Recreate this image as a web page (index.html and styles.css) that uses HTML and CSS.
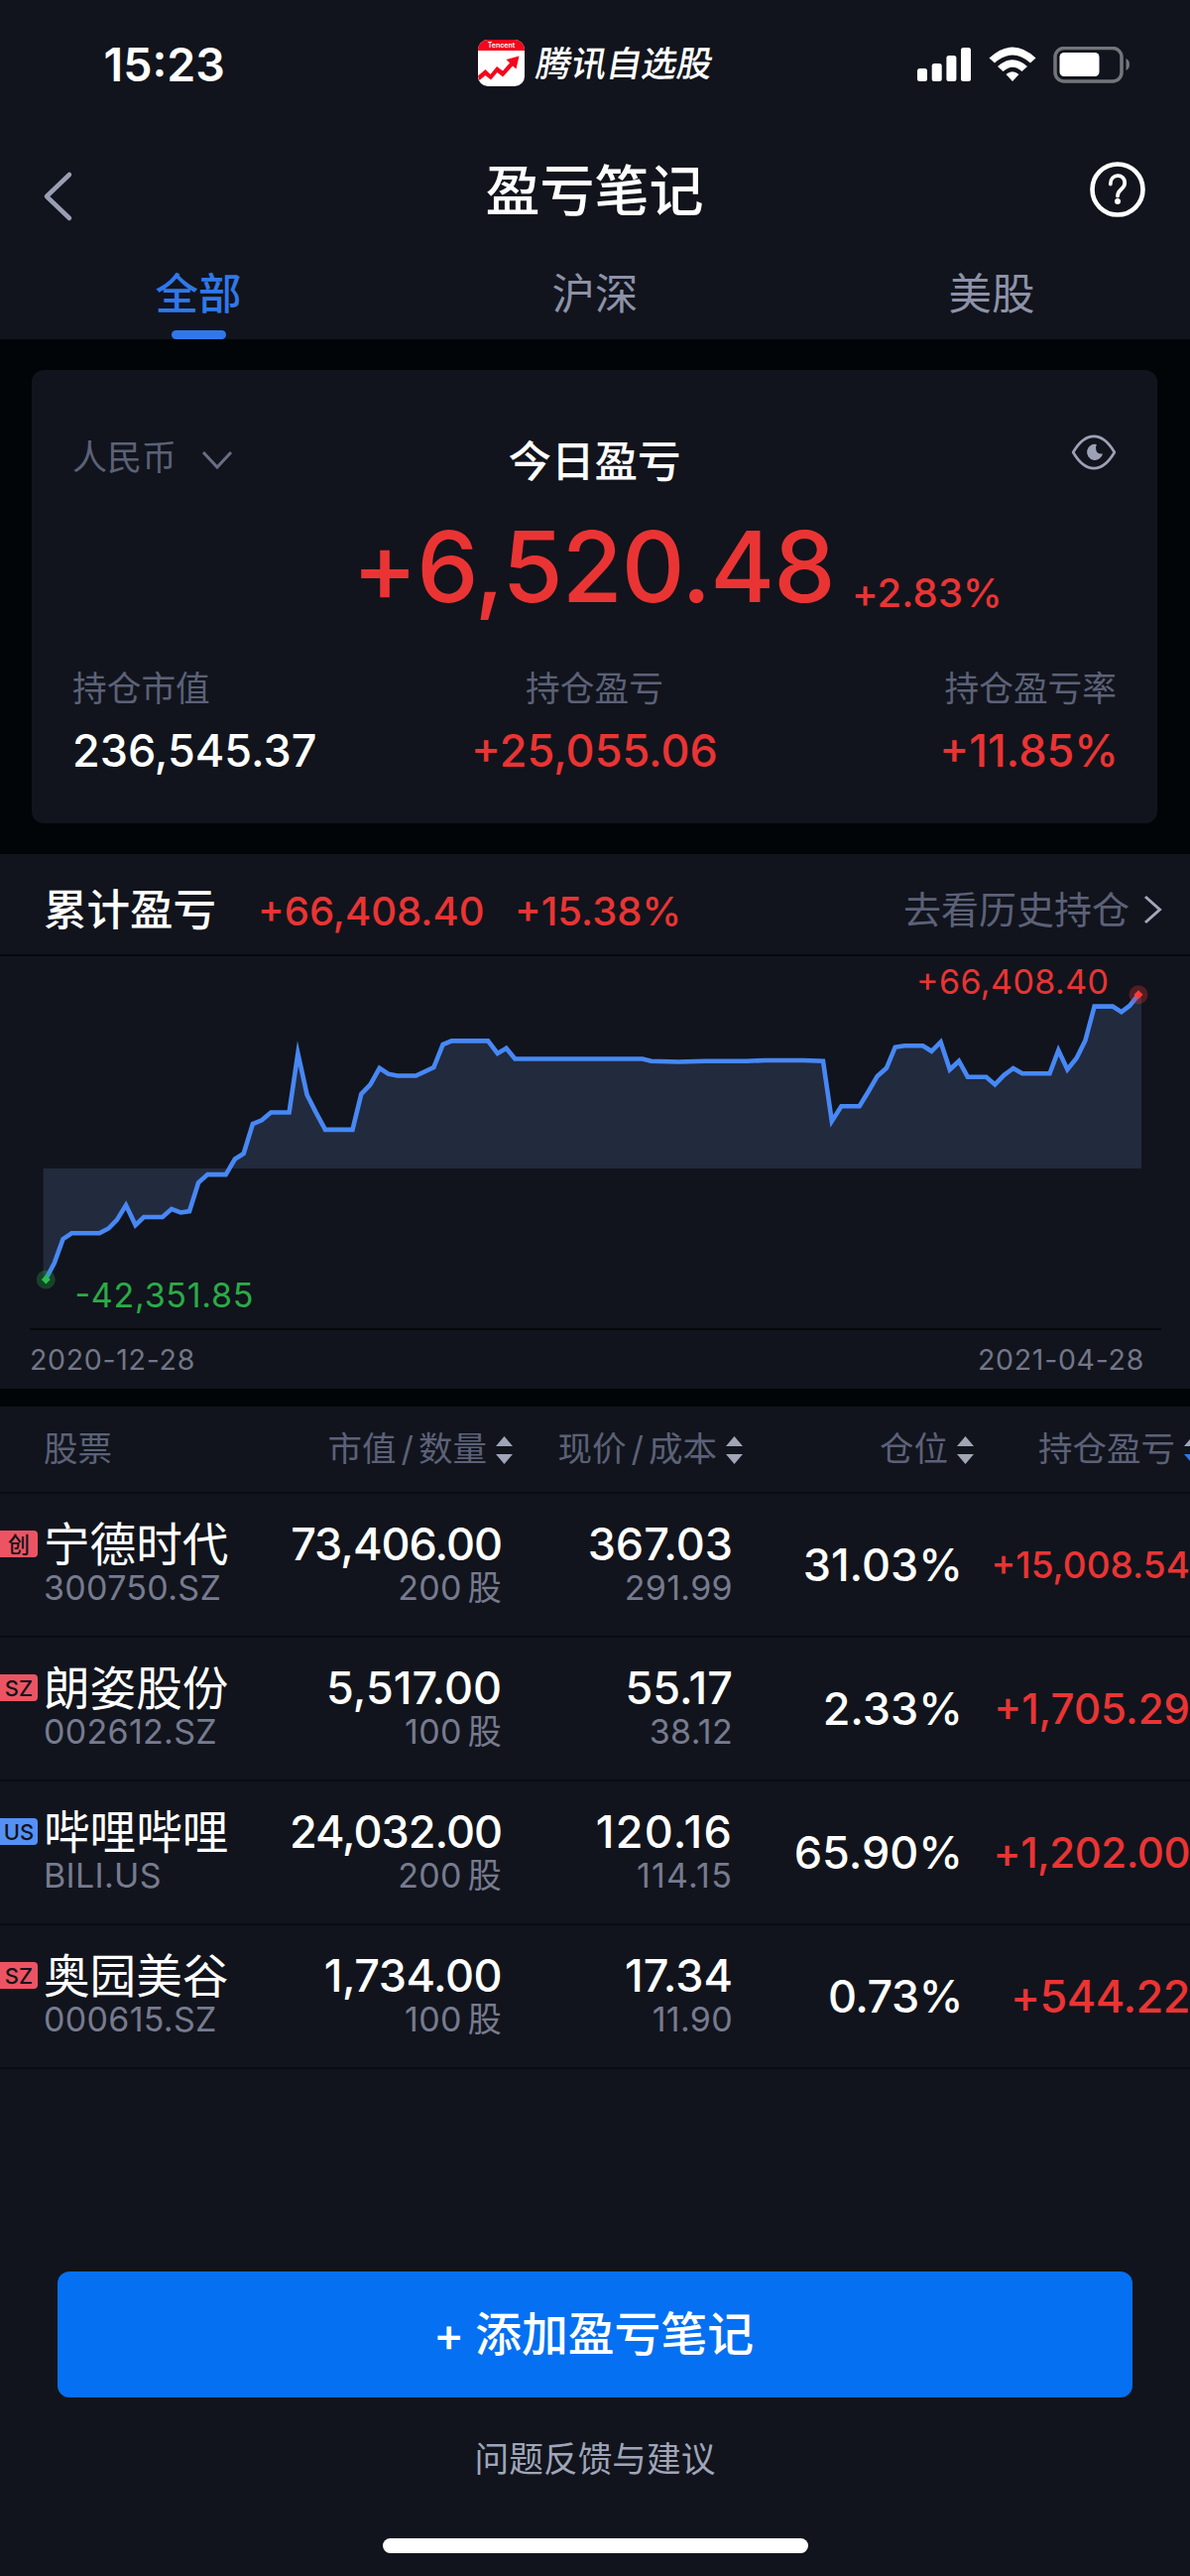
FILE: index.html
```html
<!DOCTYPE html>
<html lang="zh-CN">
<head>
<meta charset="utf-8">
<title>盈亏笔记</title>
<link rel="stylesheet" href="styles.css">
</head>
<body>
<div class="screen">
  <header class="top">
    <div class="status">
      <span class="clock">15:23</span>
      <div class="brand">
        <svg class="logo" viewBox="0 0 47 47"><rect width="47" height="47" rx="10" fill="#fff"/><path d="M0 11V10A10 10 0 0 1 10 0H37A10 10 0 0 1 47 10V11Z" fill="#f5061c"/><text x="23.5" y="8" text-anchor="middle" class="logo-text">Tencent</text><path d="M0 36.5 L7.500 30 L12.500 35 L19 27 L25 31.500 L32 23.500 L28.500 20 L41.500 16.500 L38.500 29.500 L35 26.500 L25 37.500 L19.500 33 L13 40.500 L7.500 36 L1.500 41 Z" fill="#f5061c"/></svg>
        <span class="brand-name">腾讯自选股</span>
      </div>
      <svg class="indicators" viewBox="0 0 216 42"><g fill="#fff"><rect x="0" y="22" width="10" height="13" rx="2.500"/><rect x="14.700" y="17" width="10" height="18" rx="2.500"/><rect x="29.400" y="9" width="10" height="26" rx="2.500"/><rect x="44" y="1" width="10" height="34" rx="2.500"/><path d="M72.500 11.500Q96 -10.500 119.500 11.500L114 16.500Q96 0.500 78 16.500Z"/><path d="M81 20Q96 6.500 111 20L105.500 25Q96 16.500 86.500 25Z"/><path d="M89.500 28Q96 22.500 102.500 28L96 35Z"/><rect x="143.500" y="6" width="40" height="24" rx="4.500"/></g><rect x="139" y="1.500" width="67" height="33.500" rx="9" fill="none" stroke="#73757b" stroke-width="3.500"/><path d="M210.500 12Q214 13.500 214 18Q214 22.500 210.500 24Z" fill="#73757b"/></svg>
    </div>
    <nav class="titlebar">
      <svg class="back" viewBox="0 0 32 52"><path d="M27 4L4 26L27 48" fill="none" stroke="#999eb4" stroke-width="4.500" stroke-linecap="round" stroke-linejoin="round"/></svg>
      <h1 class="title">盈亏笔记</h1>
      <svg class="help" viewBox="0 0 56 56"><circle cx="28" cy="28" r="25.500" fill="none" stroke="#fff" stroke-width="4.600"/><path d="M20.800 22.500C20.800 11.500 35.200 11.500 35.200 21.500C35.200 28 28 27.500 28 34.500" fill="none" stroke="#fff" stroke-width="3.800" stroke-linecap="round"/><circle cx="28" cy="40" r="3" fill="#fff"/></svg>
    </nav>
    <div class="tabs">
      <div class="tab tab-on">全部</div>
      <div class="tab">沪深</div>
      <div class="tab">美股</div>
    </div>
  </header>

  <section class="card">
    <div class="card-head">
      <div class="currency">人民币<svg class="down" viewBox="0 0 32 20"><path d="M2 2L16 17L30 2" fill="none" stroke="#696e85" stroke-width="3"/></svg></div>
      <h2 class="card-title">今日盈亏</h2>
      <svg class="eye" viewBox="0 0 48 38"><path d="M2 19Q12 2 24 2Q36 2 46 19Q36 36 24 36Q12 36 2 19Z" fill="none" stroke="#9ca1b6" stroke-width="2.800" stroke-linejoin="round"/><path d="M27 10.500A8.500 8.500 0 1 0 33.500 20.500Q27.500 21.500 26.500 17Q25.500 13.500 27 10.500Z" fill="#9ca1b6"/></svg>
    </div>
    <div class="today"><span class="today-sum">+6,520.48</span><span class="today-rate">+2.83%</span></div>
    <div class="stats">
      <div class="stat"><div class="stat-name">持仓市值</div><div class="stat-num white">236,545.37</div></div>
      <div class="stat mid"><div class="stat-name">持仓盈亏</div><div class="stat-num red">+25,055.06</div></div>
      <div class="stat end"><div class="stat-name">持仓盈亏率</div><div class="stat-num red pct">+11.85%</div></div>
    </div>
  </section>

  <section class="total">
    <div class="total-head">
      <h2 class="total-title">累计盈亏</h2>
      <span class="total-num">+66,408.40</span>
      <span class="total-num rate">+15.38%</span>
      <a class="history">去看历史持仓<svg class="right" viewBox="0 0 20 30"><path d="M3 2L17.500 15L3 28" fill="none" stroke="#a3a7b8" stroke-width="3"/></svg></a>
    </div>
    <svg class="chart" viewBox="0 964 1200 375">
      <path class="area" d="M43.600 1178V1292L45.900 1290L54.700 1273.600L63.500 1249.200L72.300 1243.300L100.300 1243.300L109.400 1238.500L117.900 1229.900L127 1215.100L136.600 1235.100L145 1227L163.800 1227L173 1218.800L182.200 1222.500L191 1221.100L200.100 1192.200L209.300 1184.100L227.700 1184.100L236.900 1168.500L245.700 1163L254.900 1133L264 1129.300L273.200 1121.500L291.600 1121.500L300.400 1062L309.600 1103.800L318.800 1121.900L328 1138.900L355.500 1138.900L364.300 1103L373.500 1093.400L382.700 1076.800L391.500 1082.700L400.700 1084.500L419.400 1084.500L437.400 1076L446.600 1053.100L455.400 1049.400L492.100 1049.400L501.700 1062L510.500 1056.800L519.300 1067.500L647.800 1067.500L656.600 1069.700L684.200 1070.500L711 1069.700L753 1069.700L772 1069L810.500 1069L830 1069.700L838.800 1130.400L848.400 1115.300L866.700 1115.300L875.500 1100.800L884.700 1084.900L893.900 1076.800L902.700 1055.700L911.900 1054.200L930.600 1054.200L939.400 1059.800L948.600 1050.500L957.800 1078.300L967 1069.700L975.800 1085.700L994.500 1085.700L1003.300 1093.400L1012.500 1083.800L1021.700 1077.100L1030.900 1082.300L1058.500 1082.300L1067.300 1059L1076.400 1078.300L1085.600 1066.800L1094.400 1049L1103.600 1014.600L1122 1014.600L1130.800 1020.200L1139.200 1013.900L1148 1002.800H1151V1178Z"/>
      <polyline class="line" points="45.900,1290 54.700,1273.600 63.500,1249.200 72.300,1243.300 100.300,1243.300 109.400,1238.500 117.900,1229.900 127,1215.100 136.600,1235.100 145,1227 163.800,1227 173,1218.800 182.200,1222.500 191,1221.100 200.100,1192.200 209.300,1184.100 227.700,1184.100 236.900,1168.500 245.700,1163 254.900,1133 264,1129.300 273.200,1121.500 291.600,1121.500 300.400,1062 309.600,1103.800 318.800,1121.900 328,1138.900 355.500,1138.900 364.300,1103 373.500,1093.400 382.700,1076.800 391.500,1082.700 400.700,1084.500 419.400,1084.500 437.400,1076 446.600,1053.100 455.400,1049.400 492.100,1049.400 501.700,1062 510.500,1056.800 519.300,1067.500 647.800,1067.500 656.600,1069.700 684.200,1070.500 711,1069.700 753,1069.700 772,1069 810.500,1069 830,1069.700 838.800,1130.400 848.400,1115.300 866.700,1115.300 875.500,1100.800 884.700,1084.900 893.900,1076.800 902.700,1055.700 911.900,1054.200 930.600,1054.200 939.400,1059.800 948.600,1050.500 957.800,1078.300 967,1069.700 975.800,1085.700 994.500,1085.700 1003.300,1093.400 1012.500,1083.800 1021.700,1077.100 1030.900,1082.300 1058.500,1082.300 1067.300,1059 1076.400,1078.300 1085.600,1066.800 1094.400,1049 1103.600,1014.600 1122,1014.600 1130.800,1020.200 1139.200,1013.900 1148,1002.800"/>
      <circle cx="46.300" cy="1290" r="9.500" fill="#27b148" opacity=".3"/><path d="M46.300 1285.500L50.800 1290L46.300 1294.500L41.800 1290Z" fill="#27c04a"/>
      <circle cx="1148" cy="1002.800" r="9.500" fill="#ee3434" opacity=".3"/><path d="M1148 998.300L1152.500 1002.800L1148 1007.300L1143.500 1002.800Z" fill="#ff3b3b"/>
      <text class="peak" x="924" y="1001.500" textLength="194">+66,408.40</text>
      <text class="trough" x="75.500" y="1318" textLength="180">-42,351.85</text>
    </svg>
    <div class="dates"><span>2020-12-28</span><span>2021-04-28</span></div>
  </section>

  <section class="table">
    <div class="row head">
      <div class="c-name">股票</div>
      <div class="c-value">市值<i>/</i>数量<svg class="sort" viewBox="0 0 17 28"><path d="M8.500 0L17 10H0Z"/><path d="M0 18H17L8.500 28Z"/></svg></div>
      <div class="c-price">现价<i>/</i>成本<svg class="sort" viewBox="0 0 17 28"><path d="M8.500 0L17 10H0Z"/><path d="M0 18H17L8.500 28Z"/></svg></div>
      <div class="c-share">仓位<svg class="sort" viewBox="0 0 17 28"><path d="M8.500 0L17 10H0Z"/><path d="M0 18H17L8.500 28Z"/></svg></div>
      <div class="c-gain">持仓盈亏<svg class="sort" viewBox="0 0 17 28"><path d="M8.500 0L17 10H0Z"/><path class="active" d="M0 18H17L8.500 28Z"/></svg></div>
    </div>
    <div class="row">
      <span class="tag">创</span>
      <div class="c-name"><div class="name">宁德时代</div><div class="sub">300750.SZ</div></div>
      <div class="c-value"><div class="num tight">73,406.00</div><div class="sub">200<b>股</b></div></div>
      <div class="c-price"><div class="num">367.03</div><div class="sub">291.99</div></div>
      <div class="c-share num">31.03%</div>
      <div class="c-gain g-small">+15,008.54</div>
    </div>
    <div class="row">
      <span class="tag">SZ</span>
      <div class="c-name"><div class="name">朗姿股份</div><div class="sub">002612.SZ</div></div>
      <div class="c-value"><div class="num">5,517.00</div><div class="sub">100<b>股</b></div></div>
      <div class="c-price"><div class="num">55.17</div><div class="sub">38.12</div></div>
      <div class="c-share num">2.33%</div>
      <div class="c-gain g-mid">+1,705.29</div>
    </div>
    <div class="row">
      <span class="tag us">US</span>
      <div class="c-name"><div class="name">哔哩哔哩</div><div class="sub">BILI.US</div></div>
      <div class="c-value"><div class="num tight">24,032.00</div><div class="sub">200<b>股</b></div></div>
      <div class="c-price"><div class="num loose">120.16</div><div class="sub loose">114.15</div></div>
      <div class="c-share num">65.90%</div>
      <div class="c-gain g-mid snug">+1,202.00</div>
    </div>
    <div class="row">
      <span class="tag">SZ</span>
      <div class="c-name"><div class="name">奥园美谷</div><div class="sub">000615.SZ</div></div>
      <div class="c-value"><div class="num snug">1,734.00</div><div class="sub">100<b>股</b></div></div>
      <div class="c-price"><div class="num">17.34</div><div class="sub">11.90</div></div>
      <div class="c-share num snug">0.73%</div>
      <div class="c-gain snug">+544.22</div>
    </div>
  </section>

  <footer class="foot">
    <button class="add"><span>+</span>添加盈亏笔记</button>
    <a class="feedback">问题反馈与建议</a>
    <div class="home"></div>
  </footer>
</div>
</body>
</html>
```
FILE: styles.css
```css
* { box-sizing: border-box; margin: 0; padding: 0; }
body {
  background: #020508;
  color: #fff;
  font-family: Inter, "Noto Sans CJK SC", sans-serif;
}
svg { display: block; flex: none; }
.screen { width: 1200px; height: 2597px; overflow: hidden; display: flex; flex-direction: column; }
.red { color: #ea3434; }
.white { color: #fff; }

.top { height: 342px; background: #11141c; }
.status { display: flex; height: 130px; padding-top: 40px; }
.clock { width: 482px; padding-left: 104.500px; font-size: 46.500px; font-weight: 600; line-height: 50px; }
.brand { display: flex; gap: 7px; width: 443px; }
.logo { width: 47px; height: 47px; }
.logo-text { font: 600 7px Inter, sans-serif; fill: #fff; }
.brand-name { font-size: 35.500px; font-weight: 500; line-height: 50px; transform: skewX(-10deg); transform-origin: 0 60%; }
.indicators { width: 216px; height: 42px; margin-top: 7px; }

.titlebar { display: flex; justify-content: space-between; height: 124px; padding: 33px 45px 0 43px; }
.back { width: 32px; height: 52px; margin-top: 9px; }
.title { width: 260px; margin-left: 25px; text-align: center; font-size: 55px; font-weight: 500; line-height: 58px; }
.help { width: 56px; height: 56px; }

.tabs { display: grid; grid-template-columns: repeat(3, 400px); height: 88px; }
.tab { display: flex; flex-direction: column; align-items: center; padding-top: 11px; font-size: 43.500px; line-height: 62px; color: #8d92a8; }
.tab-on { color: #3078ea; font-weight: 500; }
.tab-on::after { content: ""; width: 55px; height: 9px; margin-top: 6px; border-radius: 4.500px; background: #3078ea; }

.card { width: 1135px; height: 457px; margin: 31px 0 30.500px 32px; padding: 60px 41px 0; border-radius: 12px; background: #11141c; }
.card-head { display: grid; grid-template-columns: 1fr auto 1fr; height: 84px; }
.currency { display: flex; gap: 25px; font-size: 35px; line-height: 57px; color: #5c6178; }
.down { width: 32px; height: 20px; margin-top: 21px; }
.card-title { font-size: 43.500px; font-weight: 500; line-height: 64px; }
.eye { width: 48px; height: 36px; margin: 5px -1px 0 0; justify-self: end; }
.today { display: flex; height: 150px; padding-left: 282px; color: #ea3434; }
.today-sum { width: 504px; font-size: 99px; font-weight: 500; line-height: 108px; letter-spacing: -.9px; }
.today-rate { font-size: 40px; font-weight: 500; line-height: 40px; margin-top: 61px; letter-spacing: .1px; }
.stats { display: grid; grid-template-columns: 1fr auto 1fr; }
.mid { text-align: center; }
.end { text-align: right; }
.stat-name { font-size: 34.700px; line-height: 55px; color: #5c6178; }
.stat-num { font-size: 45px; font-weight: 500; line-height: 69px; }
.pct { margin-right: -2px; }

.total { height: 539.500px; background: #11141c; }
.total-head { display: flex; height: 103.500px; padding: 25px 28px 0 44px; border-bottom: 2px solid #05080c; line-height: 62px; }
.total-title { width: 216px; font-size: 43.500px; font-weight: 500; }
.total-num { width: 259px; font-size: 40px; font-weight: 500; line-height: 66px; color: #ea3434; }
.rate { width: 190px; }
.history { display: flex; gap: 13px; margin-left: auto; font-size: 38px; color: #5c6178; }
.right { width: 20px; height: 30px; margin-top: 16px; }
.chart { width: 1200px; height: 375px; }
.area { fill: #222a3e; }
.line { fill: none; stroke: #4788f5; stroke-width: 4.600; stroke-miterlimit: 10; }
.peak, .trough { font-size: 34px; }
.peak { fill: #ea3434; }
.trough { fill: #2bab47; }
.dates { display: flex; justify-content: space-between; width: 1141px; height: 61px; margin-left: 30px; padding: 0 17px 0 0; border-top: 2px solid #05080c; font-size: 28.500px; line-height: 60px; letter-spacing: .7px; color: #737788; }

.table { margin-top: 17.500px; flex: 1; background: #11141c; }
.row { position: relative; display: grid; grid-template-columns: 44px 246px 216px 232px 233px 229px; height: 145px; border-bottom: 2px solid #0a0c12; }
.row > div { white-space: nowrap; }
.c-name { grid-column: 2; }
.c-value, .c-price, .c-share, .c-gain { text-align: right; }
.head { height: 88px; font-size: 34.500px; line-height: 86px; color: #5c6178; }
.head i { font-style: normal; margin: 0 5px; }
.head > div { display: flex; gap: 0; }
.head .c-value, .head .c-price, .head .c-share { justify-content: flex-end; margin-right: -11px; }
.head .c-gain { padding-left: 76px; }
.sort { width: 17px; height: 28px; margin: 30px 0 0 9px; fill: #a0a6b6; }
.active { fill: #3078ea; }
.tag { position: absolute; left: 0; top: 37px; width: 38px; height: 27.500px; border-radius: 0 4px 4px 0; background: #ed5463; color: #11141c; font-size: 22px; font-weight: 500; line-height: 28px; text-align: center; }
.us { background: #5591f5; }
.name { margin-top: 21px; font-size: 46.600px; line-height: 60px; height: 60px; }
.sub { font-size: 34px; line-height: 26px; color: #777b8f; margin-top: 1px; letter-spacing: .3px; white-space: nowrap; }
.sub b { font-weight: 400; margin-left: 6px; }
.num { font-size: 45px; font-weight: 500; }
.row .c-value .num, .row .c-price .num { line-height: 60px; height: 60px; margin-top: 21px; }
.row .c-price > div { margin-right: -1px; }
.row:not(.head) .c-share, .row:not(.head) .c-gain { line-height: 143px; }
.row:not(.head) .c-gain { font-size: 45px; font-weight: 500; color: #ea3434; }
.row:not(.head) .g-small { font-size: 37px; }
.row:not(.head) .g-mid { font-size: 42px; }
.row .tight { letter-spacing: -1px; }
.row .snug { letter-spacing: -.5px; }
.row .loose { letter-spacing: 1.200px; }

.foot { position: absolute; top: 2290px; left: 0; width: 1200px; display: flex; flex-direction: column; align-items: center; }
.add { width: 1084px; height: 127px; border: 0; border-radius: 12px; background: #0570f1; color: #fff; font: 500 46.800px/127px Inter, "Noto Sans CJK SC", sans-serif; }
.add span { margin: 0 11px 0 -3px; }
.feedback { margin-top: 35px; font-size: 34.700px; line-height: 55px; color: #a0a5b8; }
.home { width: 429px; height: 15px; margin-top: 52px; border-radius: 8px; background: #fff; }
```
